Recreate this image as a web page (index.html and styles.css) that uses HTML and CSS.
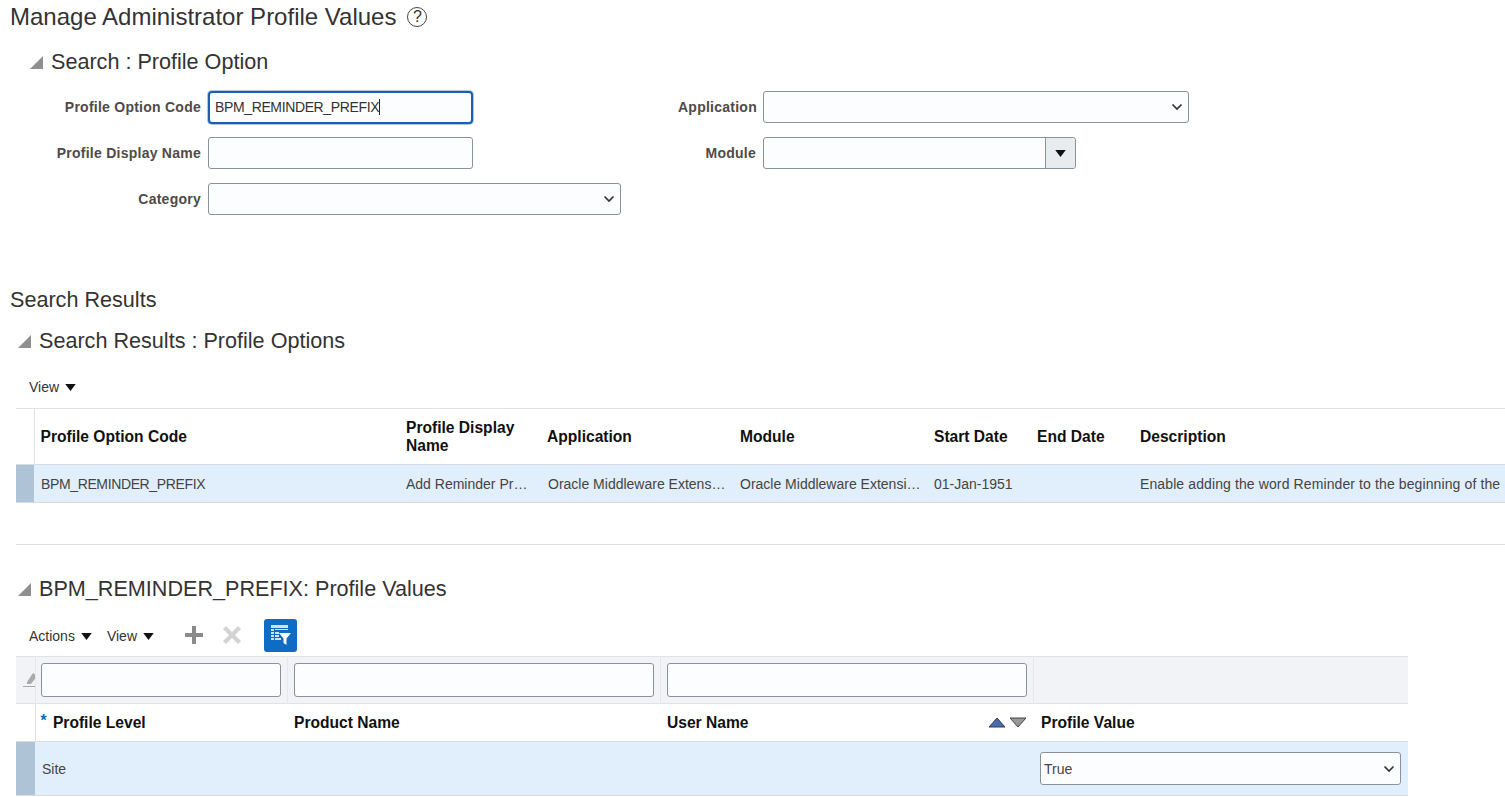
FILE: index.html
```html
<!DOCTYPE html>
<html lang="en">
<head>
  <meta charset="UTF-8">
  <title>Manage Administrator Profile Values</title>
  <link rel="stylesheet" href="styles.css">
</head>
<body>
  <header class="page-title">
    <h1>Manage Administrator Profile Values</h1>
    <span class="help">?</span>
  </header>

  <section class="search">
    <h2 class="section-head">
      <svg class="disclose" viewBox="0 0 14 14"><path d="M14 0V14H0Z"/></svg>
      Search : Profile Option
    </h2>
    <div class="search-form">
      <div class="form-col">
        <div class="form-row">
          <label>Profile Option Code</label>
          <div class="field field-focus"><span class="caret code">BPM_REMINDER_PREFIX</span></div>
        </div>
        <div class="form-row">
          <label>Profile Display Name</label>
          <div class="field"></div>
        </div>
        <div class="form-row">
          <label>Category</label>
          <div class="field field-select category">
            <svg class="chev" viewBox="0 0 12 8"><path d="M1.500 1.500 6 6l4.500-4.500"/></svg>
          </div>
        </div>
      </div>
      <div class="form-col form-col-right">
        <div class="form-row">
          <label>Application</label>
          <div class="field field-select application">
            <svg class="chev" viewBox="0 0 12 8"><path d="M1.500 1.500 6 6l4.500-4.500"/></svg>
          </div>
        </div>
        <div class="form-row">
          <label>Module</label>
          <div class="field combo">
            <span class="combo-btn"><svg class="tri" viewBox="0 0 12 8"><path d="M0 0H12L6 8Z"/></svg></span>
          </div>
        </div>
      </div>
    </div>
  </section>

  <h2 class="results-title">Search Results</h2>

  <section class="results">
    <h2 class="section-head">
      <svg class="disclose" viewBox="0 0 14 14"><path d="M14 0V14H0Z"/></svg>
      Search Results : Profile Options
    </h2>
    <div class="toolbar toolbar-view">
      <span class="menu">View <svg class="tri" viewBox="0 0 12 8"><path d="M0 0H12L6 8Z"/></svg></span>
    </div>
    <table class="grid options">
      <colgroup>
        <col class="c-sel"><col class="c-code"><col class="c-name"><col class="c-app">
        <col class="c-mod"><col class="c-start"><col class="c-end"><col class="c-desc">
      </colgroup>
      <thead>
        <tr>
          <th class="sel"></th>
          <th class="tight">Profile Option Code</th>
          <th>Profile Display Name</th>
          <th class="tight">Application</th>
          <th>Module</th>
          <th>Start Date</th>
          <th>End Date</th>
          <th>Description</th>
        </tr>
      </thead>
      <tbody>
        <tr class="selected">
          <td class="sel"></td>
          <td class="code">BPM_REMINDER_PREFIX</td>
          <td>Add Reminder Pr…</td>
          <td>Oracle Middleware Extens…</td>
          <td>Oracle Middleware Extensi…</td>
          <td>01-Jan-1951</td>
          <td></td>
          <td class="desc">Enable adding the word Reminder to the beginning of the</td>
        </tr>
      </tbody>
    </table>
  </section>

  <section class="values">
    <h2 class="section-head">
      <svg class="disclose" viewBox="0 0 14 14"><path d="M14 0V14H0Z"/></svg>
      BPM_REMINDER_PREFIX: Profile Values
    </h2>
    <div class="toolbar toolbar-actions">
      <span class="menu">Actions <svg class="tri" viewBox="0 0 12 8"><path d="M0 0H12L6 8Z"/></svg></span>
      <span class="menu">View <svg class="tri" viewBox="0 0 12 8"><path d="M0 0H12L6 8Z"/></svg></span>
      <svg class="tool-icon add" viewBox="0 0 18 18"><path d="M7 0h4v7h7v4h-7v7H7v-7H0V7h7Z"/></svg>
      <svg class="tool-icon del" viewBox="0 0 18 18"><path d="M3 0l6 6 6-6 3 3-6 6 6 6-3 3-6-6-6 6-3-3 6-6-6-6Z"/></svg>
      <span class="filter-btn">
        <svg viewBox="0 0 20 20">
          <path class="f-lines" d="M0 0h17v3H0Zm0 4h3v2H0Zm4 0h13v1H4ZM0 7h3v2H0Zm4 0h4v2H4ZM0 10h3v2H0Zm4 0h4v2H4ZM0 13h3v2H0Zm4 0h6v2H4Z"/>
          <path class="f-funnel" d="M8 8h12l-4.500 5.500V20l-3-2v-4.500Z"/>
        </svg>
      </span>
    </div>
    <table class="grid profile-values">
      <colgroup>
        <col class="v-sel"><col class="v-level"><col class="v-wide"><col class="v-wide"><col class="v-value">
      </colgroup>
      <thead>
        <tr class="filter-row">
          <th class="clear">
            <svg viewBox="0 0 14 16"><path d="M4 10 10 1l4 3-6 8H4Z"/><path d="M0 14h12v1H0Z"/></svg>
          </th>
          <th class="tight"><div class="field filter-field"></div></th>
          <th><div class="field filter-field"></div></th>
          <th><div class="field filter-field"></div></th>
          <th></th>
        </tr>
        <tr class="head-row">
          <th class="sel"></th>
          <th><span class="req">*</span> Profile Level</th>
          <th>Product Name</th>
          <th>
            <div class="sort-head">
              <span>User Name</span>
              <span class="sort">
                <svg viewBox="0 0 18 11"><path class="sort-up" d="M9 1 17 10H1Z"/></svg>
                <svg viewBox="0 0 18 11"><path class="sort-down" d="M1 1H17L9 10Z"/></svg>
              </span>
            </div>
          </th>
          <th class="wide-pad">Profile Value</th>
        </tr>
      </thead>
      <tbody>
        <tr class="selected">
          <td class="sel"></td>
          <td>Site</td>
          <td></td>
          <td></td>
          <td>
            <div class="field field-select value-select">
              <span>True</span>
              <svg class="chev" viewBox="0 0 12 8"><path d="M1.500 1.500 6 6l4.500-4.500"/></svg>
            </div>
          </td>
        </tr>
      </tbody>
    </table>
  </section>
</body>
</html>
```

FILE: styles.css
```css
* {
  box-sizing: border-box;
}
html, body {
  height: 797px;
  overflow: hidden;
}
body {
  margin: 0;
  font-family: "Liberation Sans", Arial, sans-serif;
  font-size: 14px;
  color: #333;
  background: #fff;
}
h1, h2 {
  margin: 0;
  font-weight: normal;
  color: #333;
}

/* page title */
.page-title {
  display: flex;
  align-items: center;
  gap: 11px;
  height: 34px;
  padding-left: 10px;
}
.page-title h1 {
  font-size: 24px;
}
.help {
  width: 20px;
  height: 20px;
  border: 1.5px solid #444;
  border-radius: 50%;
  font-size: 16px;
  line-height: 17px;
  text-align: center;
}

.section-head {
  display: flex;
  align-items: center;
  gap: 8px;
  font-size: 21.6px;
}
.disclose {
  width: 13px;
  height: 13px;
  fill: #8f8f8f;
}

/* search form */
.search {
  padding: 15px 0 0 30px;
}
.search-form {
  display: flex;
  margin-top: 16px;
  margin-left: -30px;
}
.form-col {
  display: flex;
  flex-direction: column;
  gap: 14px;
  width: 678px;
}
.form-col-right {
  width: auto;
}
.form-row {
  display: flex;
  align-items: center;
  gap: 7px;
  height: 32px;
}
.form-row label {
  width: 201px;
  font-weight: bold;
  letter-spacing: 0.25px;
  color: #4f4a48;
  text-align: right;
}
.form-col-right label {
  width: 78px;
}
.field {
  display: flex;
  align-items: center;
  width: 265px;
  height: 32px;
  padding: 0 6px;
  border: 1px solid #8a9199;
  border-radius: 3px;
  background: #fcfdfe;
}
.field-focus {
  height: 33px;
  border: 2px solid #1b5fb0;
  border-radius: 4px;
  padding: 0 5px;
  box-shadow: 0 0 0 1px rgba(27, 95, 176, 0.35);
}
.caret {
  border-right: 1px solid #222;
  line-height: 16px;
}
.code {
  letter-spacing: -0.37px;
}
.field-select {
  justify-content: space-between;
  padding-right: 5px;
}
.category {
  width: 413px;
  justify-content: flex-end;
}
.application {
  width: 426px;
  justify-content: flex-end;
}
.combo {
  justify-content: flex-end;
  width: 313px;
  padding: 0;
}
.combo-btn {
  display: flex;
  align-items: center;
  justify-content: center;
  width: 30px;
  height: 100%;
  border-left: 1px solid #8a9199;
  background: #e9ecef;
  border-radius: 0 3px 3px 0;
}
.chev {
  width: 12px;
  height: 8px;
  fill: none;
  stroke: #333;
  stroke-width: 1.7;
}
.tri {
  width: 11px;
  height: 7px;
  fill: #111;
}

.results-title {
  margin: 72px 0 0 10px;
  font-size: 21.6px;
}

/* results table */
.results {
  height: 232px;
  margin-left: 16px;
  padding-top: 15px;
  border-bottom: 1px solid #dfdfdf;
}
.results .section-head, .values .section-head {
  margin-left: 2px;
}
.toolbar {
  display: flex;
  align-items: center;
}
.toolbar-view {
  height: 32px;
  margin-top: 17px;
  padding-left: 13px;
}
.menu {
  display: inline-flex;
  align-items: center;
  gap: 6px;
  color: #333;
}
.grid {
  border-collapse: collapse;
  table-layout: fixed;
}
.options {
  margin-top: 5px;
  width: 1489px;
  border-top: 1px solid #dfe3e6;
}
.grid th {
  padding: 0 7px;
  font-size: 15.6px;
  font-weight: bold;
  color: #111;
  text-align: left;
  line-height: 18px;
}
.grid td {
  padding: 0 7px;
  color: #444;
  white-space: nowrap;
  overflow: hidden;
}
.grid td.desc {
  letter-spacing: 0.11px;
}
.options thead tr {
  height: 56px;
}
.options tbody tr {
  height: 38px;
}
.selected {
  background: #e1effc;
  border-top: 1px solid #d5dde3;
  border-bottom: 1px solid #d5dde3;
}
.grid .sel {
  padding: 0;
  border-right: 1px solid #dfe3e6;
}
.selected .sel {
  background: #aec4d6;
  border-right: 0;
}
.c-sel { width: 18px; }
.c-code { width: 365px; }
.c-name { width: 142px; }
.c-app { width: 192px; }
.c-mod { width: 194px; }
.c-start { width: 103px; }
.c-end { width: 103px; }
.c-desc { width: 372px; }

/* profile values */
.values {
  padding: 31px 0 0 16px;
}
.toolbar-actions {
  height: 34px;
  margin-top: 16px;
  padding-left: 13px;
}
.toolbar-actions .menu {
  margin-top: 2px;
}
.toolbar-actions .menu + .menu {
  margin-left: 15px;
}
.tool-icon {
  width: 18px;
  height: 18px;
}
.add {
  margin-left: 31px;
  fill: #8a8a8a;
}
.del {
  margin-left: 20px;
  fill: #d3d3d3;
}
.filter-btn {
  display: flex;
  align-items: center;
  justify-content: center;
  width: 33px;
  height: 33px;
  margin-left: 23px;
  border-radius: 3px;
  background: #0f6cc4;
}
.filter-btn svg {
  width: 20px;
  height: 20px;
}
.f-lines {
  fill: #cfe2f5;
}
.f-funnel {
  fill: #fff;
}
.profile-values {
  width: 1392px;
  margin-top: 4px;
}
.v-sel { width: 19px; }
.v-level { width: 252px; }
.v-wide { width: 373px; }
.v-value { width: 375px; }
.filter-row {
  height: 47px;
  background: #f1f3f7;
  border-top: 1px solid #dfe3e6;
  border-bottom: 1px solid #dfe3e6;
}
.filter-row th {
  padding: 0 6px;
  border-right: 1px solid #e4e7ec;
}
.filter-row th:last-child {
  border-right: 0;
}
.grid th.tight {
  padding-left: 6px;
}
.filter-row th.tight {
  padding-left: 5px;
}
.grid th.wide-pad {
  padding-left: 8px;
}
.grid .clear {
  padding: 0 0 0 7px;
  overflow: hidden;
}
.clear svg {
  display: block;
  width: 14px;
  height: 16px;
  fill: #aaa;
}
.filter-field {
  width: 100%;
  height: 34px;
}
.head-row {
  height: 38px;
}
.req {
  margin: 0 2px 0 -2px;
  color: #0b6cb5;
  line-height: 0;
  vertical-align: 2px;
}
.sort-head {
  display: flex;
  align-items: center;
  justify-content: space-between;
}
.sort {
  display: flex;
  gap: 3px;
  margin-right: -1px;
}
.sort svg {
  width: 18px;
  height: 11px;
}
.sort-up {
  fill: #4a6aa8;
  stroke: #2e3f5e;
}
.sort-down {
  fill: #999;
  stroke: #444;
}
.profile-values tbody tr {
  height: 54px;
}
.value-select {
  width: 100%;
  height: 33px;
  padding-left: 3px;
  color: #444;
}
```
